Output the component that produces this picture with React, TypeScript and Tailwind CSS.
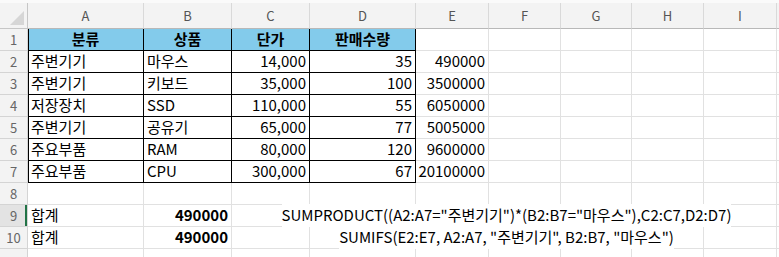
import React from 'react';

type Cell = {
  text?: string;
  align?: 'left' | 'right' | 'center';
  bold?: boolean;
  table?: boolean; // black-bordered data table cell
  head?: boolean; // blue header fill
  first?: boolean; // column A inside the table
};

const columns = ['A', 'B', 'C', 'D', 'E', 'F', 'G', 'H', 'I'];

const tableRows: string[][] = [
  ['주변기기', '마우스', '14,000', '35', '490000'],
  ['주변기기', '키보드', '35,000', '100', '3500000'],
  ['저장장치', 'SSD', '110,000', '55', '6050000'],
  ['주변기기', '공유기', '65,000', '77', '5005000'],
  ['주요부품', 'RAM', '80,000', '120', '9600000'],
  ['주요부품', 'CPU', '300,000', '67', '20100000'],
];

function buildRows(): Cell[][] {
  const rows: Cell[][] = [];
  rows.push([
    { text: '분류', align: 'center', bold: true, table: true, head: true, first: true },
    { text: '상품', align: 'center', bold: true, table: true, head: true },
    { text: '단가', align: 'center', bold: true, table: true, head: true },
    { text: '판매수량', align: 'center', bold: true, table: true, head: true },
    {}, {}, {}, {}, {},
  ]);
  tableRows.forEach((r) => {
    rows.push([
      { text: r[0], align: 'left', table: true, first: true },
      { text: r[1], align: 'left', table: true },
      { text: r[2], align: 'right', table: true },
      { text: r[3], align: 'right', table: true },
      { text: r[4], align: 'right' },
      {}, {}, {}, {},
    ]);
  });
  rows.push([{}, {}, {}, {}, {}, {}, {}, {}, {}]);
  return rows;
}

const formulas = [
  'SUMPRODUCT((A2:A7="주변기기")*(B2:B7="마우스"),C2:C7,D2:D7)',
  'SUMIFS(E2:E7, A2:A7, "주변기기", B2:B7, "마우스")',
];

const gridCols = 'grid grid-cols-[28px_116px_88px_78px_106px_73px_72px_71px_72px_73px_1fr]';

function RowHeader({ n, active }: { n?: number; active?: boolean }) {
  return (
    <div
      className={`h-[22px] flex items-center justify-center border-r border-b border-[#d4d4d4] text-[13px] text-[#666666] ${
        active ? 'bg-[#e3e3e3] shadow-[inset_-2px_0_0_#217346]' : 'bg-[#f3f3f3]'
      }`}
    >
      {n}
    </div>
  );
}

function DataCell({ cell }: { cell: Cell }) {
  const border = cell.table ? 'border-r border-b border-black' : 'border-r border-b border-[#e1e1e1]';
  const align =
    cell.align === 'right' ? 'justify-end pr-[3px]' : cell.align === 'center' ? 'justify-center' : 'justify-start pl-[3px]';
  return (
    <div
      className={`h-[22px] flex items-center whitespace-nowrap ${border} ${align} ${cell.head ? 'bg-[#83cbeb]' : 'bg-white'} ${
        cell.bold ? 'font-bold' : ''
      } ${cell.first ? 'shadow-[inset_1px_0_0_#000]' : ''}`}
    >
      {cell.text}
    </div>
  );
}

export default function App() {
  const rows = buildRows();
  return (
    <div
      className="w-[779px] h-[257px] overflow-hidden bg-white text-[15px] text-black"
      style={{ fontFamily: '"Noto Sans CJK KR", "Noto Sans", sans-serif' }}
    >
      {/* column headers */}
      <div className={`${gridCols} h-[29px] bg-[#f3f3f3] border-t-[3px] border-[#fafafa]`}>
        <div className="relative border-r border-b border-[#c6c6c6]">
          <svg className="absolute right-[3px] bottom-[3px]" width="14" height="14" viewBox="0 0 14 14">
            <polygon points="14,0 14,14 0,14" fill="#d6d6d6" />
          </svg>
        </div>
        {columns.map((c) => (
          <div
            key={c}
            className="flex items-center justify-center border-r border-b border-[#d9d9d9] border-b-[#b8b8b8] text-[13px] text-[#555555]"
          >
            {c}
          </div>
        ))}
        <div className="border-b border-[#b8b8b8]" />
      </div>

      {/* rows 1-8 */}
      {rows.map((row, i) => (
        <div key={i} className={gridCols}>
          <RowHeader n={i + 1} />
          {row.map((cell, j) => (
            <DataCell key={j} cell={cell} />
          ))}
          <div className="border-b border-[#e1e1e1]" />
        </div>
      ))}

      {/* rows 9-10: totals */}
      {formulas.map((f, i) => (
        <div key={f} className={gridCols}>
          <RowHeader n={9 + i} active={i === 0} />
          <div className="h-[22px] flex items-center pl-[3px] border-r border-b border-[#e1e1e1]">합계</div>
          <div className="h-[22px] flex items-center justify-end pr-[3px] font-bold border-r border-b border-[#e1e1e1]">
            490000
          </div>
          <div className="h-[22px] border-r border-b border-[#e1e1e1]" />
          <div className="col-span-5 h-[22px] flex items-center justify-center overflow-visible whitespace-nowrap border-r border-b border-[#e1e1e1]">
            <span className="relative z-10 bg-white">{f}</span>
          </div>
          <div className="h-[22px] border-r border-b border-[#e1e1e1]" />
          <div className="border-b border-[#e1e1e1]" />
        </div>
      ))}

      {/* next row, only its top edge shows */}
      <div className={gridCols}>
        <RowHeader />
        {columns.map((c) => (
          <div key={c} className="h-[22px] border-r border-[#e1e1e1]" />
        ))}
      </div>
    </div>
  );
}
